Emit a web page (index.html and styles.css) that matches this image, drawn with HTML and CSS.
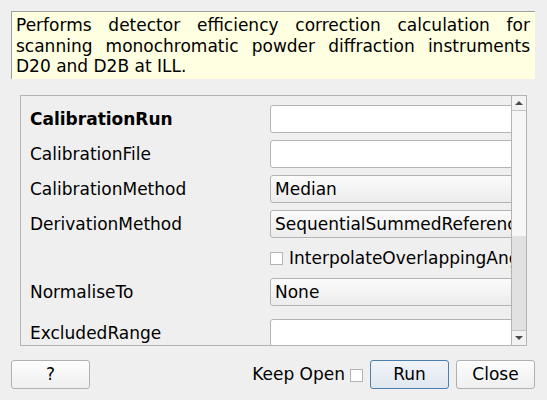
FILE: index.html
```html
<!DOCTYPE html>
<html>
<head>
<meta charset="utf-8">
<link rel="stylesheet" href="styles.css">
</head>
<body>
<div class="dialog">
  <div class="desc">Performs detector efficiency correction calculation for scanning monochromatic powder diffraction instruments D20 and D2B at ILL.</div>
  <div class="props">
    <div class="viewport">
      <div class="row"><div class="name bold">CalibrationRun</div><div class="edit"></div></div>
      <div class="row"><div class="name">CalibrationFile</div><div class="edit"></div></div>
      <div class="row"><div class="name">CalibrationMethod</div><div class="combo">Median</div></div>
      <div class="row"><div class="name">DerivationMethod</div><div class="combo">SequentialSummedReference1D</div></div>
      <div class="row check-row"><div class="name"></div><div class="check-field"><span class="box"></span><span>InterpolateOverlappingAngles</span></div></div>
      <div class="row"><div class="name">NormaliseTo</div><div class="combo">None</div></div>
      <div class="row excluded"><div class="name">ExcludedRange</div><div class="edit"></div></div>
    </div>
    <div class="vscroll">
      <div class="arrow up"><span class="tri-up"></span></div>
      <div class="track"><div class="thumb"></div></div>
      <div class="arrow down"><span class="tri-down"></span></div>
    </div>
  </div>
  <div class="buttons">
    <div class="btn">?</div>
    <div class="spacer"></div>
    <div class="keep">Keep Open</div>
    <span class="box keep-box"></span>
    <div class="btn default">Run</div>
    <div class="btn">Close</div>
  </div>
</div>
</body>
</html>
```

FILE: styles.css
```css
html, body {
  margin: 0;
  padding: 0;
  background: #efefef;
}
body {
  font-family: "DejaVu Sans", sans-serif;
  font-size: 17px;
  color: #000;
}
.dialog {
  width: 547px;
  height: 400px;
  display: flex;
  flex-direction: column;
  box-sizing: border-box;
  padding: 11px 12px 0 11px;
}
.desc {
  height: 68px;
  box-sizing: border-box;
  border-top: 1px solid #a0a0a0;
  border-left: 1px solid #a0a0a0;
  background: #ffffe1;
  padding: 3px 5px 0 4px;
  line-height: 20.5px;
  text-align: justify;
}
.props {
  margin: 16px 8px 0 9px;
  height: 251px;
  box-sizing: border-box;
  border: 1px solid #b4b4b4;
  display: flex;
}
.viewport {
  flex: 1;
  overflow: hidden;
  padding: 9px 0 0 9px;
  display: flex;
  flex-direction: column;
  gap: 7px;
}
.row {
  display: flex;
  align-items: center;
  height: 28px;
  flex-shrink: 0;
}
.name {
  width: 240px;
  flex-shrink: 0;
  white-space: nowrap;
}
.bold { font-weight: bold; }
.edit, .combo {
  width: 300px;
  flex-shrink: 0;
  height: 28px;
  box-sizing: border-box;
  border: 1px solid #b4b4b4;
  border-radius: 3px;
  background: #fff;
}
.combo {
  background: linear-gradient(#fbfbfb, #ececec);
  padding-left: 4px;
  line-height: 26px;
  white-space: nowrap;
  overflow: hidden;
}
.check-row { height: 26px; }
.check-field {
  display: flex;
  align-items: center;
  gap: 6px;
  white-space: nowrap;
}
.box {
  display: inline-block;
  width: 13px;
  height: 13px;
  box-sizing: border-box;
  border: 1px solid #b4b4b4;
  background: #fff;
  flex-shrink: 0;
}
.excluded { margin-top: 6px; }
.vscroll {
  width: 15px;
  flex-shrink: 0;
  box-sizing: border-box;
  border-left: 1px solid #b4b4b4;
  display: flex;
  flex-direction: column;
  background: #f6f6f6;
}
.arrow {
  height: 14px;
  flex-shrink: 0;
  display: flex;
  align-items: center;
  justify-content: center;
  background: #f2f2f2;
}
.arrow.up { border-bottom: 1px solid #c4c4c4; }
.arrow.down { border-top: 1px solid #c4c4c4; }
.tri-up {
  width: 0; height: 0;
  border-left: 4px solid transparent;
  border-right: 4px solid transparent;
  border-bottom: 4px solid #4a4a4a;
}
.tri-down {
  width: 0; height: 0;
  border-left: 4px solid transparent;
  border-right: 4px solid transparent;
  border-top: 4px solid #4a4a4a;
}
.track {
  flex: 1;
  display: flex;
  flex-direction: column;
  justify-content: flex-end;
}
.thumb {
  height: 94px;
  background: #e1e1e1;
}
.buttons {
  margin-top: 14px;
  display: flex;
  align-items: center;
  height: 29px;
}
.btn {
  width: 79px;
  height: 29px;
  box-sizing: border-box;
  border: 1px solid #b0b0b0;
  border-radius: 3px;
  background: linear-gradient(#fdfdfd, #efefef);
  display: flex;
  align-items: center;
  justify-content: center;
  padding-bottom: 2px;
}
.btn.default {
  border-color: #4b7fae;
  background: linear-gradient(#f0f4f8, #dfe7ef);
  margin-left: 7px;
  margin-right: 7px;
}
.spacer { flex: 1; }
.keep { margin-right: 5px; padding-bottom: 2px; }
.keep-box { margin-top: 1px; }
```
